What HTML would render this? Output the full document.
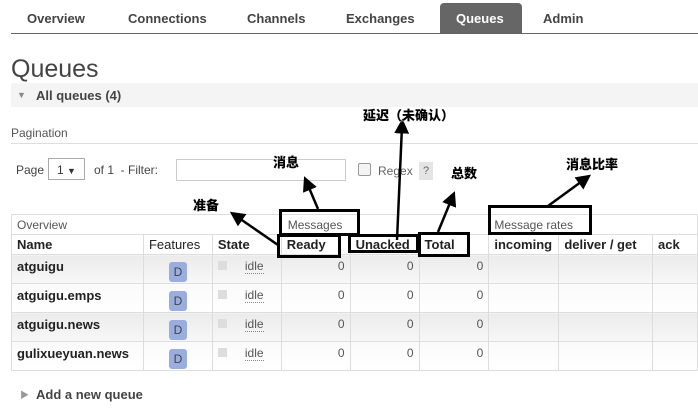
<!DOCTYPE html><html><head><meta charset="utf-8"><style>
body{margin:0;width:698px;height:412px;background:#fff;font-family:"Liberation Sans","Noto Sans CJK SC",sans-serif;position:relative;overflow:hidden;color:#222}
.a{position:absolute;white-space:nowrap}
.tab{font-size:13px;font-weight:bold;color:#444;top:11px}
.cjk{font-family:"Noto Sans CJK SC",sans-serif;font-weight:900;font-size:13px;color:#000;text-shadow:0 0 2px #fff,0 0 2px #fff}
table{position:absolute;left:11px;top:214px;border-collapse:collapse;font-size:12px}
td{border:1px solid #ddd;padding:0 5px;vertical-align:top;box-sizing:border-box}
.h td{height:20px;font-weight:bold;font-size:13px;vertical-align:middle}
.r td{height:29px;padding-top:4px}
.r.o td{background:linear-gradient(#ebebeb,#f8f8f8)}
.r.e td{background:linear-gradient(#fafafa,#fff)}
.n{text-align:right;color:#555}
.D{display:inline-block;width:18px;height:20px;background:#99aedf;border-radius:3px;text-align:center;line-height:20px;color:#444;margin-top:3px}
.bx{position:absolute;border:3px solid #000;box-sizing:border-box}
</style></head><body>
<div class="a tab" style="left:27px">Overview</div>
<div class="a tab" style="left:128px">Connections</div>
<div class="a tab" style="left:247px">Channels</div>
<div class="a tab" style="left:346px">Exchanges</div>
<div class="a" style="left:440px;top:3px;width:82px;height:31px;background:#666;border-radius:4px 4px 0 0"></div>
<div class="a tab" style="left:456px;color:#fff">Queues</div>
<div class="a tab" style="left:543px">Admin</div>
<div class="a" style="left:11px;top:33px;width:687px;height:1px;background:#666"></div>
<div class="a" style="left:11px;top:55px;font-size:25px;color:#444">Queues</div>
<div class="a" style="left:11px;top:83px;width:687px;height:24px;background:#f4f4f4"></div>
<div class="a" style="left:17px;top:90px;font-size:9px;color:#888">▼</div>
<div class="a" style="left:36px;top:88px;font-size:13px;font-weight:bold;color:#444">All queues (4)</div>
<div class="a" style="left:11px;top:126px;font-size:12px;color:#555">Pagination</div>
<div class="a" style="left:11px;top:143px;width:687px;height:1px;background:#ddd"></div>
<div class="a" style="left:16px;top:163px;font-size:12px;color:#444">Page</div>
<div class="a" style="left:48px;top:158px;width:37px;height:22px;border:1px solid #aaa;font-size:12px;line-height:22px;color:#333;box-sizing:border-box;padding-left:8px">1 <span style="font-size:9px">▼</span></div>
<div class="a" style="left:94px;top:163px;font-size:12px;color:#444">of 1 &nbsp;- Filter:</div>
<div class="a" style="left:176px;top:159px;width:170px;height:22px;border:1px solid #ccc;box-sizing:border-box"></div>
<div class="a" style="left:358px;top:163px;width:11px;height:11px;border:1px solid #999;border-radius:2px;background:#f4f4f4"></div>
<div class="a" style="left:378px;top:164px;font-size:12px;color:#666">Regex</div>
<div class="a" style="left:419px;top:162px;width:14px;height:18px;background:#e4e4e4;font-size:11px;text-align:center;line-height:18px;color:#666">?</div>
<table>
<tr style="height:20px"><td colspan="3" style="width:270px;color:#555;vertical-align:middle">Overview</td><td colspan="3" style="color:#555;vertical-align:middle;padding-left:6px">Messages</td><td colspan="3" style="color:#555;vertical-align:middle">Message rates</td></tr>
<tr class="h"><td style="width:132px">Name</td><td style="width:69px;font-weight:normal">Features</td><td style="width:69px">State</td><td style="width:69px">Ready</td><td style="width:69px">Unacked</td><td style="width:70px">Total</td><td style="width:70px">incoming</td><td style="width:94px">deliver / get</td><td style="width:45px">ack</td></tr>
<tr class="r o"><td><b style="font-size:13px">atguigu</b></td><td style="text-align:center"><span class="D">D</span></td><td><span style="display:inline-block;width:9px;height:9px;background:#ddd;margin:2px 18px 0 0"></span><span style="border-bottom:1px dotted #888;color:#555">idle</span></td><td class="n">0</td><td class="n">0</td><td class="n">0</td><td></td><td></td><td></td></tr>
<tr class="r e"><td><b style="font-size:13px">atguigu.emps</b></td><td style="text-align:center"><span class="D">D</span></td><td><span style="display:inline-block;width:9px;height:9px;background:#ddd;margin:2px 18px 0 0"></span><span style="border-bottom:1px dotted #888;color:#555">idle</span></td><td class="n">0</td><td class="n">0</td><td class="n">0</td><td></td><td></td><td></td></tr>
<tr class="r o"><td><b style="font-size:13px">atguigu.news</b></td><td style="text-align:center"><span class="D">D</span></td><td><span style="display:inline-block;width:9px;height:9px;background:#ddd;margin:2px 18px 0 0"></span><span style="border-bottom:1px dotted #888;color:#555">idle</span></td><td class="n">0</td><td class="n">0</td><td class="n">0</td><td></td><td></td><td></td></tr>
<tr class="r e"><td><b style="font-size:13px">gulixueyuan.news</b></td><td style="text-align:center"><span class="D">D</span></td><td><span style="display:inline-block;width:9px;height:9px;background:#ddd;margin:2px 18px 0 0"></span><span style="border-bottom:1px dotted #888;color:#555">idle</span></td><td class="n">0</td><td class="n">0</td><td class="n">0</td><td></td><td></td><td></td></tr>
</table>
<div class="a" style="left:20px;top:388px;font-size:9px;color:#999">▶</div>
<div class="a" style="left:36px;top:387px;font-size:13px;font-weight:bold;color:#444">Add a new queue</div>
<div class="bx" style="left:279px;top:209px;width:81px;height:27px"></div>
<div class="bx" style="left:277px;top:234px;width:64px;height:24px"></div>
<div class="bx" style="left:348px;top:234px;width:71px;height:19px"></div>
<div class="bx" style="left:418px;top:232px;width:52px;height:25px"></div>
<div class="bx" style="left:488px;top:205px;width:104px;height:30px"></div>
<svg class="a" style="left:0;top:0" width="698" height="412"><defs><marker id="m" markerWidth="6" markerHeight="6" refX="3" refY="3" orient="auto"><path d="M0,0L6,3L0,6z" fill="#000"/></marker></defs>
<g stroke="#000" stroke-width="2.5" marker-end="url(#m)"><line x1="397" y1="240" x2="402" y2="126"/><line x1="318" y1="209" x2="307" y2="183"/><line x1="438" y1="232" x2="452" y2="198"/><line x1="548" y1="206" x2="585" y2="179"/><line x1="278" y1="245" x2="236" y2="216"/></g></svg>
<div class="a cjk" style="left:363px;top:105px">延迟（未确认）</div>
<div class="a cjk" style="left:273px;top:152px">消息</div>
<div class="a cjk" style="left:451px;top:163px">总数</div>
<div class="a cjk" style="left:566px;top:154px">消息比率</div>
<div class="a cjk" style="left:193px;top:195px">准备</div>
</body></html>
